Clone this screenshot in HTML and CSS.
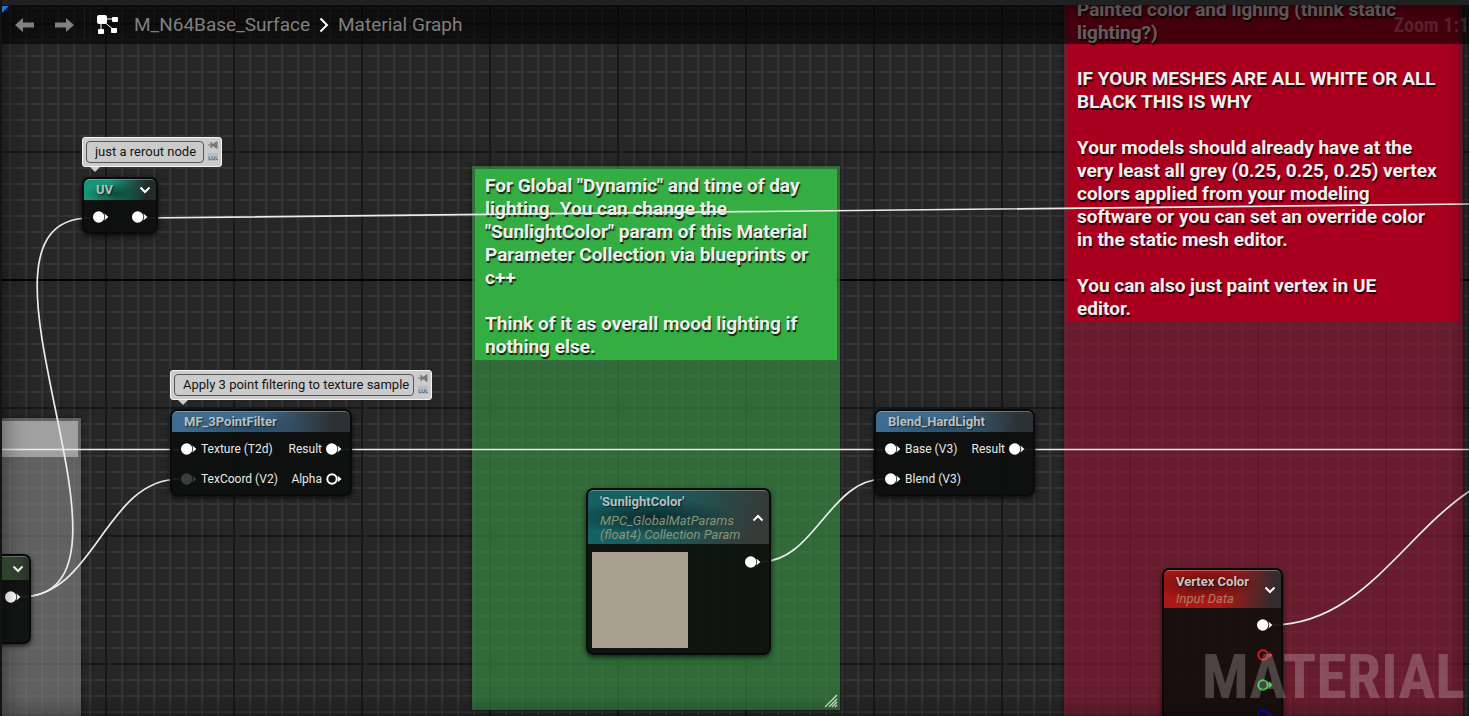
FILE: index.html
```html
<!DOCTYPE html>
<html lang="en">
<head>
  <meta charset="UTF-8">
  <meta name="viewport" content="width=device-width, initial-scale=1.0">
  <title>Material Graph</title>
  <link rel="stylesheet" href="styles.css">
</head>
<body>
  <!-- Shared icons -->
  <svg class="sprite" aria-hidden="true">
    <symbol id="pin-full" viewBox="0 0 16 12">
      <circle cx="5.7" cy="6" r="5.7" fill="currentColor"/>
      <path d="M11.4 2.6L15.4 6L11.4 9.4Q13 6 11.4 2.6Z" fill="currentColor"/>
    </symbol>
    <symbol id="pin-empty" viewBox="0 0 16 12">
      <circle cx="6" cy="6" r="4.7" fill="#111" fill-opacity="0.5" stroke="currentColor" stroke-width="2"/>
      <path d="M11.8 2.8L15.6 6L11.8 9.2Z" fill="currentColor"/>
    </symbol>
    <symbol id="chevron" viewBox="0 0 12 8">
      <path d="M1.5 1.5L6 6L10.5 1.5" fill="none" stroke="currentColor" stroke-width="2"/>
    </symbol>
    <symbol id="pushpin" viewBox="0 0 10 8">
      <path d="M0 3.500H2.500V1H4V2.500H6L8 0.500H9.500V7.500H8L6 5.500H4V7H2.500V4.500H0Z" fill="currentColor"/>
    </symbol>
    <symbol id="vis" viewBox="0 0 10 8">
      <path d="M0 0H10V8H0Z" fill="#b4bcc5"/>
      <path d="M1 3.500V6.500H3M4 3.500V6.500H6.500V3.500M8 3.500V6.500H10" fill="none" stroke="#65788b"/>
    </symbol>
  </svg>

  <main class="graph">
    <section class="comment comment-grey">
      <h2></h2>
    </section>

    <section class="comment comment-green">
      <h2>For Global "Dynamic" and time of day lighting. You can change the "SunlightColor" param of this Material Parameter Collection via blueprints or c++<br><br>Think of it as overall mood lighting if nothing else.</h2>
      <svg class="resize" viewBox="0 0 14 14"><path d="M1 13L13 1M5 13L13 5M8 13L13 8M11 13L13 11" stroke="#d5e6d6" stroke-width="1.3"/></svg>
    </section>

    <section class="comment comment-red">
      <h2>Painted color and lighing (think static lighting?)<br><br>IF YOUR MESHES ARE ALL WHITE OR ALL BLACK THIS IS WHY<br><br>Your models should already have at the very least all grey (0.25, 0.25, 0.25) vertex colors applied from your modeling software or you can set an override color in the static mesh editor.<br><br>You can also just paint vertex in UE<br>editor.</h2>
    </section>

    <svg class="wires" aria-hidden="true">
      <path d="M0 449.500H180M340 449.500H884M1024 449.500H1600"/>
      <path d="M20 597C168 597 -58 218 90 218"/>
      <path d="M20 597C96 597 104 479 180 479"/>
      <path d="M146 218L1469 204L1700 202"/>
      <path d="M760 562C815 562 829 479 884 479"/>
      <path d="M1272 625C1389 625 1427 467 1544 467"/>
    </svg>

    <div class="bubble bubble-uv">
      <input type="text" value="just a rerout node" aria-label="Node comment">
      <div class="bubble-tools">
        <button aria-label="Pin bubble"><svg><use href="#pushpin"/></svg></button>
        <button aria-label="Bubble visibility"><svg><use href="#vis"/></svg></button>
      </div>
    </div>
    <article class="node node-uv">
      <header>
        <h3>UV</h3>
        <button class="toggle" aria-label="Expand"><svg><use href="#chevron"/></svg></button>
      </header>
      <div class="row">
        <svg class="pin"><use href="#pin-full"/></svg>
        <svg class="pin out"><use href="#pin-full"/></svg>
      </div>
    </article>

    <div class="bubble bubble-filter">
      <input type="text" value="Apply 3 point filtering to texture sample" aria-label="Node comment">
      <div class="bubble-tools">
        <button aria-label="Pin bubble"><svg><use href="#pushpin"/></svg></button>
        <button aria-label="Bubble visibility"><svg><use href="#vis"/></svg></button>
      </div>
    </div>
    <article class="node node-filter">
      <header><h3>MF_3PointFilter</h3></header>
      <div class="row">
        <svg class="pin"><use href="#pin-full"/></svg><span>Texture (T2d)</span>
        <span class="out">Result</span><svg class="pin"><use href="#pin-full"/></svg>
      </div>
      <div class="row">
        <svg class="pin dim"><use href="#pin-full"/></svg><span>TexCoord (V2)</span>
        <span class="out">Alpha</span><svg class="pin"><use href="#pin-empty"/></svg>
      </div>
    </article>

    <article class="node node-blend">
      <header><h3>Blend_HardLight</h3></header>
      <div class="row">
        <svg class="pin"><use href="#pin-full"/></svg><span>Base (V3)</span>
        <span class="out">Result</span><svg class="pin"><use href="#pin-full"/></svg>
      </div>
      <div class="row">
        <svg class="pin"><use href="#pin-full"/></svg><span>Blend (V3)</span>
      </div>
    </article>

    <article class="node node-sun">
      <header>
        <div>
          <h3>'SunlightColor'</h3>
          <p>MPC_GlobalMatParams<br>(float4) Collection Param</p>
        </div>
        <button class="toggle up" aria-label="Collapse"><svg><use href="#chevron"/></svg></button>
      </header>
      <div class="preview">
        <div class="swatch"></div>
        <svg class="pin out"><use href="#pin-full"/></svg>
      </div>
    </article>

    <article class="node node-vertex">
      <header>
        <div>
          <h3>Vertex Color</h3>
          <p>Input Data</p>
        </div>
        <button class="toggle" aria-label="Expand"><svg><use href="#chevron"/></svg></button>
      </header>
      <div class="row"><svg class="pin out"><use href="#pin-full"/></svg></div>
      <div class="row"><svg class="pin out red"><use href="#pin-empty"/></svg></div>
      <div class="row"><svg class="pin out green"><use href="#pin-empty"/></svg></div>
      <div class="row"><svg class="pin out blue"><use href="#pin-empty"/></svg></div>
    </article>

    <article class="node node-left">
      <header><button class="toggle" aria-label="Expand"><svg><use href="#chevron"/></svg></button></header>
      <div class="row"><svg class="pin out"><use href="#pin-full"/></svg></div>
    </article>

    <div class="vignette"></div>
    <div class="watermark">MATERIAL</div>

    <nav class="toolbar">
      <button class="nav-btn" aria-label="Back"><svg viewBox="0 0 20 16"><path d="M0 8L8 1V5.500H19V10.500H8V15Z" fill="currentColor"/></svg></button>
      <button class="nav-btn" aria-label="Forward"><svg viewBox="0 0 20 16"><path d="M20 8L12 1V5.500H1V10.500H12V15Z" fill="currentColor"/></svg></button>
      <span class="divider"></span>
      <svg class="graph-icon" viewBox="0 0 24 22">
        <path d="M6 5H20M5 5V18M6 6L19 17" stroke="#fff" stroke-width="1" fill="none"/>
        <g fill="#fff">
          <rect x="1" y="1" width="10" height="9" rx="2"/>
          <rect x="16" y="3" width="6" height="5" rx="1"/>
          <rect x="2" y="15" width="6" height="5" rx="1"/>
          <rect x="15" y="14" width="6" height="5" rx="1"/>
        </g>
      </svg>
      <a href="#">M_N64Base_Surface</a>
      <svg class="crumb-sep" viewBox="0 0 10 16"><path d="M1.500 1.500L8 8L1.500 14.500" fill="none" stroke="#fff" stroke-width="2"/></svg>
      <a href="#">Material Graph</a>
      <span class="zoom">Zoom 1:1</span>
    </nav>
    <span class="corner"></span>
  </main>
</body>
</html>
```
FILE: styles.css
```css
* {
  box-sizing: border-box;
}

body {
  margin: 0;
  background: #1f2020;
  font-family: Roboto, "Liberation Sans", sans-serif;
  font-size: 12px;
}

h2, h3, p {
  margin: 0;
}

button {
  display: flex;
  padding: 0;
  border: none;
  background: none;
  color: inherit;
  cursor: pointer;
}

.sprite {
  position: absolute;
  width: 0;
  height: 0;
}

/* Canvas: 16px cells, a darker line every 8 cells */
.graph {
  position: relative;
  height: 100vh;
  overflow: hidden;
  border-left: 2px solid #141414;
  background-color: #262626;
  background-image:
    linear-gradient(#000, #000),
    linear-gradient(90deg, #181818 2px, transparent 2px),
    linear-gradient(#181818 2px, transparent 2px),
    linear-gradient(90deg, #343434 2px, transparent 2px),
    linear-gradient(#343434 2px, transparent 2px);
  background-size: 100% 2px, 128px 128px, 128px 128px, 16px 16px, 16px 16px;
  background-position: 0 279px, 103px 0, 0 23px, 7px 0, 0 7px;
  background-repeat: no-repeat, repeat, repeat, repeat, repeat;
}

.vignette {
  position: absolute;
  inset: 0;
  box-shadow: inset 0 0 24px rgba(0, 0, 0, 0.5);
  pointer-events: none;
}

.wires {
  position: absolute;
  top: 0;
  left: -2px;
  width: 100%;
  height: 100%;
  overflow: visible;
  fill: none;
  stroke: #e9ede9;
  stroke-width: 1.7;
}

/* Comment boxes */
.comment {
  position: absolute;
  padding: 3px;
  box-shadow: 0 0 4px rgba(0, 0, 0, 0.5);
}

.comment h2 {
  padding: 5px 16px 2px 10px;
  color: #eee;
  font-size: 19px;
  font-weight: 700;
  line-height: 23px;
  text-shadow: 1px 2px 1px rgba(0, 0, 0, 0.8);
}

.comment-grey {
  top: 418px;
  left: -200px;
  width: 279px;
  height: 400px;
  background: rgba(145, 145, 145, 0.55);
}

.comment-grey h2 {
  height: 36px;
  background: #a0a0a0;
}

.comment-green {
  top: 166px;
  left: 470px;
  width: 368px;
  height: 544px;
  background: rgba(56, 141, 68, 0.65);
}

.comment-green h2 {
  background: #34ad42;
}

.comment-red {
  top: -10px;
  left: 1062px;
  width: 399px;
  height: 800px;
  background: rgba(140, 24, 50, 0.65);
}

.comment-red h2 {
  background: #a9001f;
}

.resize {
  position: absolute;
  right: 2px;
  bottom: 2px;
  width: 14px;
  height: 14px;
}

/* Nodes */
.node {
  position: absolute;
  overflow: hidden;
  border: 2px solid #090b0a;
  border-radius: 7px;
  background: rgba(12, 15, 13, 0.93);
  box-shadow: 0 2px 5px rgba(0, 0, 0, 0.7);
  color: #e8e8e8;
}

.node header {
  display: flex;
  align-items: center;
  justify-content: space-between;
  min-height: 21px;
  margin-bottom: 2px;
  padding: 0 5px 0 12px;
  border-top: 1px solid rgba(255, 255, 255, 0.3);
  border-radius: 5px 5px 0 0;
}

.node h3 {
  color: #b9c0c3;
  font-size: 13px;
  font-weight: 700;
  line-height: 16px;
  text-shadow: 1px 1px 1px rgba(0, 0, 0, 0.6);
}

.node p {
  color: #8b9477;
  font-size: 13px;
  font-style: italic;
  line-height: 14px;
}

.row {
  display: flex;
  align-items: center;
  gap: 4px;
  height: 30px;
  padding: 0 8px 0 9px;
}

.pin {
  flex: none;
  width: 16px;
  height: 12px;
  color: #fff;
}

.out {
  margin-left: auto;
}

.pin.dim {
  color: #3b3d3c;
}

.pin.red {
  color: #e0141e;
}

.pin.green {
  color: #20c42c;
}

.pin.blue {
  color: #0a0ad0;
}

.toggle {
  color: #fff;
}

.toggle svg {
  width: 12px;
  height: 8px;
}

.toggle.up {
  transform: rotate(180deg);
}

.node-uv {
  top: 177px;
  left: 80px;
  width: 76px;
}

.node-uv header {
  background: radial-gradient(ellipse at 45% 70%, #0b4a3d, transparent 55%), linear-gradient(100deg, #17957a 35%, #222b29 85%);
}

.node-filter {
  top: 409px;
  left: 168px;
  width: 182px;
}

.node-blend {
  top: 409px;
  left: 872px;
  width: 161px;
}

.node-filter header,
.node-blend header {
  background: radial-gradient(ellipse at 45% 80%, #284b66, transparent 50%), linear-gradient(100deg, #3f6b8e 45%, #2c3133 90%);
}

.node-sun {
  top: 488px;
  left: 584px;
  width: 185px;
}

.node-sun header {
  min-height: 54px;
  background: radial-gradient(ellipse at 35% 50%, #09292b, transparent 50%), linear-gradient(110deg, #176163 35%, #343b37 90%);
}

.node-sun h3 {
  margin-bottom: 4px;
}

.preview {
  display: flex;
  align-items: flex-start;
  padding: 6px 8px 5px 4px;
}

.preview .pin {
  margin-top: 4px;
}

.swatch {
  width: 96px;
  height: 96px;
  background: #a8a18e;
}

.node-vertex {
  top: 568px;
  left: 1160px;
  width: 121px;
  height: 180px;
  background: rgba(20, 14, 13, 0.93);
}

.node-vertex header {
  min-height: 38px;
  background: radial-gradient(ellipse at 35% 35%, #57100f, transparent 50%), linear-gradient(100deg, #ac1717 50%, #322c2d 92%);
}

.node-vertex h3 {
  color: #c9c4c2;
  margin-bottom: 2px;
}

.node-vertex p {
  color: #a8805f;
}

.node-left {
  top: 554px;
  left: -101px;
  width: 130px;
  height: 90px;
}

.node-left header {
  min-height: 24px;
  justify-content: flex-end;
  background: linear-gradient(90deg, #3f5f3c 75%, #2b312b);
}

/* Comment bubbles */
.bubble {
  position: absolute;
  display: flex;
  gap: 4px;
  height: 30px;
  padding: 3px;
  border: 1px solid #f4f4f4;
  border-radius: 3px;
  background: #cbcbcb;
}

.bubble::after {
  content: "";
  position: absolute;
  top: 29px;
  left: 7px;
  border: 5px solid transparent;
  border-top-color: #cbcbcb;
  border-bottom: none;
}

.bubble input {
  flex: 1;
  min-width: 0;
  height: 22px;
  padding: 0 2px 1px 8px;
  border: 1px solid #555;
  border-radius: 4px;
  background: none;
  color: #151515;
  font-family: inherit;
  font-size: 13px;
}

.bubble-tools {
  display: flex;
  flex-direction: column;
  gap: 4px;
  color: #777;
}

.bubble-tools svg {
  width: 10px;
  height: 8px;
}

.bubble-uv {
  top: 137px;
  left: 80px;
  width: 140px;
}

.bubble-filter {
  top: 370px;
  left: 168px;
  width: 262px;
}

/* Top bar */
.toolbar {
  position: absolute;
  top: 0;
  left: 0;
  right: 0;
  display: flex;
  align-items: center;
  height: 44px;
  padding-left: 13px;
  border-top: 5px solid #1f2122;
  background: rgba(0, 0, 0, 0.6);
  color: #808080;
  font-size: 19px;
}

.toolbar a {
  color: inherit;
  line-height: 24px;
  text-decoration: none;
}

.nav-btn {
  margin-right: 19px;
}

.nav-btn + .nav-btn {
  margin-right: 10px;
}

.nav-btn svg {
  width: 20px;
  height: 16px;
}

.divider {
  width: 1px;
  height: 32px;
  margin-right: 11px;
  background: #1c1c1c;
}

.graph-icon {
  width: 24px;
  height: 22px;
  margin-right: 14px;
}

.crumb-sep {
  width: 10px;
  height: 16px;
  margin: 0 9px;
}

.zoom {
  margin-left: auto;
  color: rgba(255, 255, 255, 0.14);
  font-family: "Roboto Condensed", Roboto, sans-serif;
  font-size: 20px;
  font-weight: 700;
}

.corner {
  position: absolute;
  top: 6px;
  left: 0;
  border-top: 7px solid #1377d8;
  border-right: 7px solid transparent;
}

.watermark {
  position: absolute;
  right: 4px;
  bottom: 4px;
  color: rgba(255, 255, 255, 0.22);
  font-family: "Roboto Condensed", Roboto, sans-serif;
  font-size: 62px;
  font-weight: 700;
  line-height: 70px;
}
```
